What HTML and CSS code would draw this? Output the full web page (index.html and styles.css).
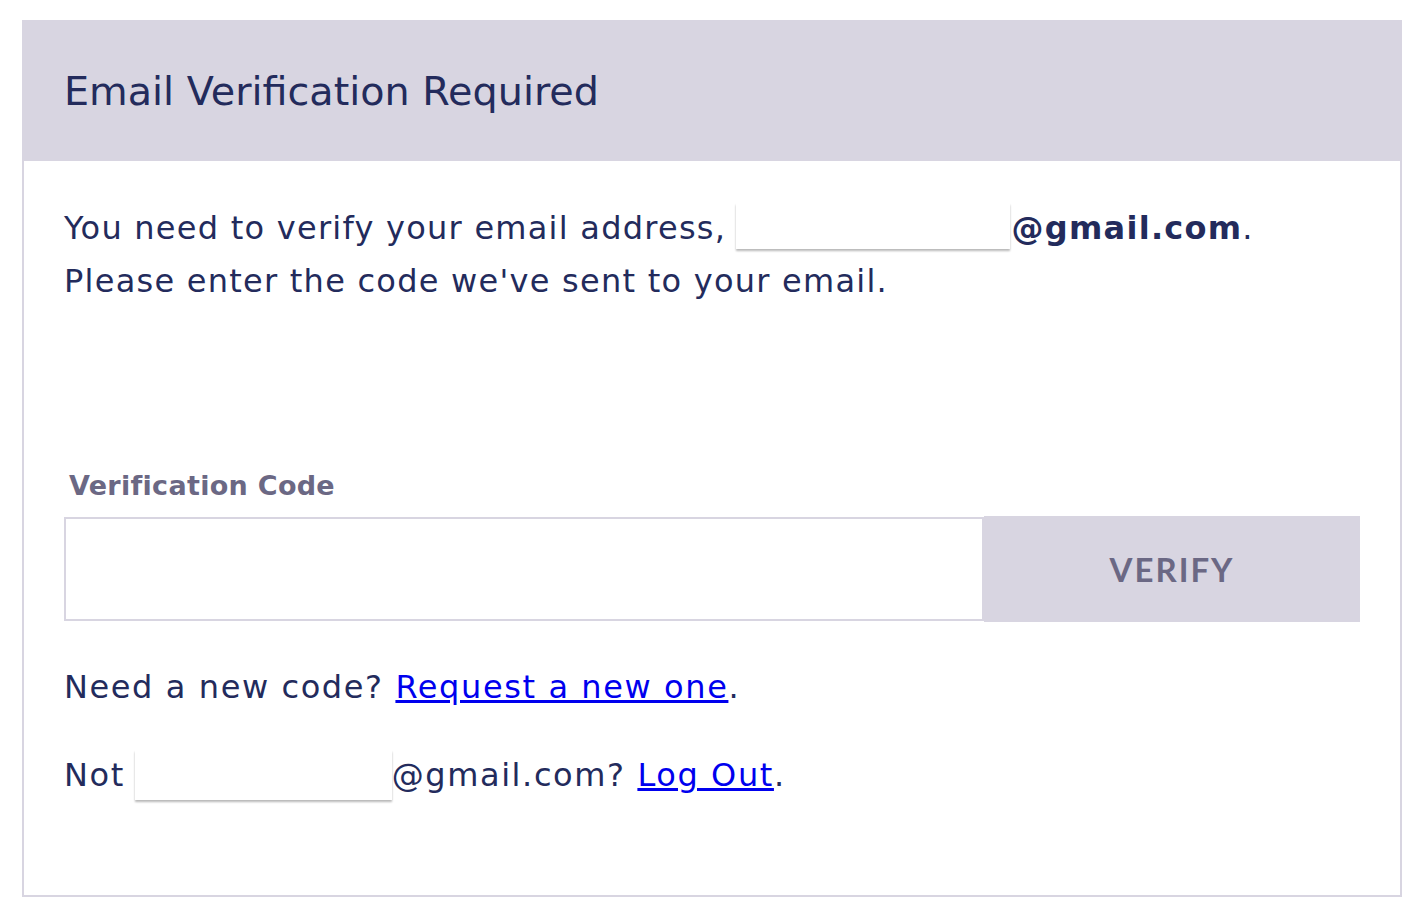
FILE: index.html
```html
<!DOCTYPE html>
<html lang="en">
<head>
<meta charset="utf-8">
<title>Email Verification Required</title>
<link rel="stylesheet" href="styles.css">
</head>
<body>
<div class="card">
  <div class="card-header">
    <h1 class="title">Email Verification Required</h1>
  </div>
  <div class="card-body">
    <p class="intro">You need to verify your email address, <span class="redact redact-1"></span><strong>@gmail.com</strong>.<br>Please enter the code we've sent to your email.</p>
    <label class="field-label" for="code">Verification Code</label>
    <div class="field-row">
      <input class="code-input" id="code" type="text">
      <button class="verify-btn" type="button">VERIFY</button>
    </div>
    <p class="line line-new">Need a new code? <a href="#">Request a new one</a>.</p>
    <p class="line line-not">Not <span class="redact redact-2"></span>@gmail.com? <a href="#">Log Out</a>.</p>
  </div>
</div>
</body>
</html>
```
FILE: styles.css
```css
html, body {
  margin: 0;
  padding: 0;
  background: #ffffff;
}
body {
  font-family: "DejaVu Sans", "Liberation Sans", sans-serif;
  color: #232b5c;
}
.card {
  margin: 20px 22px 0 22px;
  border: 2px solid #d8d5e1;
  border-top: 0;
}
.card-header {
  background: #d8d5e1;
  height: 141px;
  display: flex;
  align-items: center;
  padding-left: 40px;
}
.title {
  margin: 0;
  font-size: 39.7px;
  font-weight: 400;
  color: #232b5c;
}
.card-body {
  padding: 41px 40px 93px 40px;
}
.intro {
  margin: 0;
  font-size: 32px;
  line-height: 53px;
  letter-spacing: 1.25px;
}
.intro strong {
  font-weight: 700;
}
.redact {
  display: inline-block;
  background: #ffffff;
  box-shadow: 0 2px 2px rgba(0, 0, 0, 0.28);
  vertical-align: middle;
}
.redact-1 {
  width: 274px;
  height: 46px;
  margin-left: -2px;
  margin-right: 2px;
  position: relative;
  top: -4px;
}
.redact-2 {
  width: 257px;
  height: 50px;
  margin-left: -2px;
  position: relative;
  top: -2px;
}
.field-label {
  display: block;
  margin: 161px 0 13px 5px;
  font-size: 27px;
  line-height: 34px;
  font-weight: 700;
  letter-spacing: 0.3px;
  color: #6b6884;
}
.field-row {
  display: flex;
  align-items: center;
}
.code-input {
  flex: 1;
  height: 104px;
  box-sizing: border-box;
  border: 2px solid #d8d5e1;
  margin: 0;
  padding: 0 20px;
  font-size: 28px;
  outline: none;
}
.verify-btn {
  width: 376px;
  height: 106px;
  border: 0;
  margin: 0;
  background: #d8d5e1;
  color: #6b6884;
  font-family: "Lato", "Liberation Sans", sans-serif;
  font-weight: 700;
  font-size: 33px;
  letter-spacing: 2px;
}
.line {
  margin: 0;
  font-size: 32px;
  line-height: 53px;
  letter-spacing: 1.6px;
}
.line-new {
  margin-top: 39px;
}
.line-not {
  margin-top: 35px;
}
.line a {
  color: #0000ee;
  text-decoration: underline;
}
```
